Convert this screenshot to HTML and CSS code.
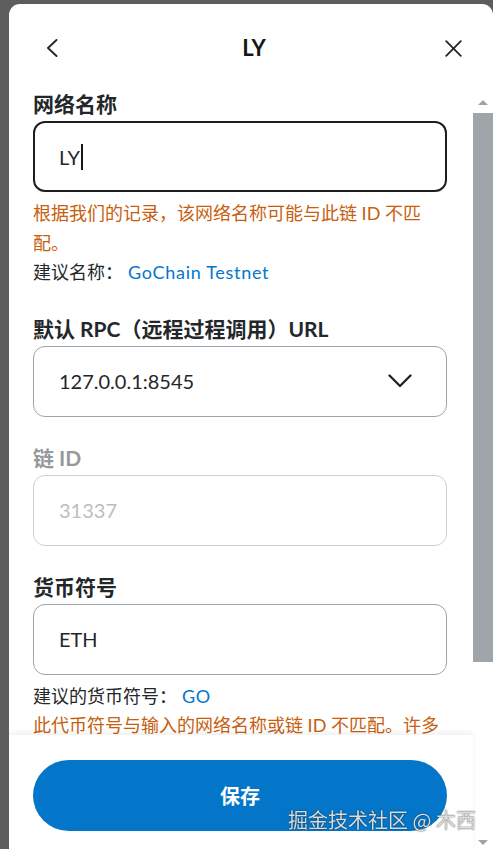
FILE: index.html
```html
<!DOCTYPE html>
<html lang="zh-CN">
<head>
<meta charset="utf-8">
<title>LY</title>
<link rel="stylesheet" href="styles.css">
</head>
<body>
<div class="modal">
  <header class="hdr">
    <button class="icon-btn back" aria-label="返回">
      <svg width="12" height="18" viewBox="0 0 12 18"><polyline points="10.5,1 2,9 10.5,17" fill="none" stroke="#24272a" stroke-width="1.9" stroke-linecap="round" stroke-linejoin="round"/></svg>
    </button>
    <h1 class="title">LY</h1>
    <button class="icon-btn close" aria-label="关闭">
      <svg width="17" height="17" viewBox="0 0 17 17"><path d="M1.2 1.2 L15.8 15.8 M15.8 1.2 L1.2 15.8" fill="none" stroke="#24272a" stroke-width="1.8" stroke-linecap="round"/></svg>
    </button>
  </header>
  <div class="body">
    <div class="main">
      <div class="content">
        <div class="form">
          <div class="field">
            <div class="lbl">网络名称</div>
            <div class="inp focused"><span class="val">LY</span><span class="caret"></span></div>
            <p class="help warn">根据我们的记录，该网络名称可能与此链 ID 不匹配。</p>
            <p class="help">建议名称：<span class="link">GoChain Testnet</span></p>
          </div>
          <div class="field">
            <div class="lbl">默认 RPC（远程过程调用）URL</div>
            <div class="inp select"><span class="val">127.0.0.1:8545</span>
              <svg class="chev" width="24" height="14" viewBox="0 0 24 14"><polyline points="1.5,1.5 12,12 22.5,1.5" fill="none" stroke="#24272a" stroke-width="2.4" stroke-linecap="round" stroke-linejoin="round"/></svg>
            </div>
          </div>
          <div class="field">
            <div class="lbl muted">链 ID</div>
            <div class="inp disabled"><span class="val">31337</span></div>
          </div>
          <div class="field">
            <div class="lbl">货币符号</div>
            <div class="inp"><span class="val">ETH</span></div>
            <p class="help">建议的货币符号：<span class="link">GO</span></p>
            <p class="help warn">此代币符号与输入的网络名称或链 ID 不匹配。许多常用代币使用相似的符号，诈骗者可以利用这一点诱骗您向他们发送更有价值的代币作为回报。在继续之前，请验证所有内容。</p>
          </div>
        </div>
      </div>
      <footer class="foot">
        <button class="save">保存</button>
      </footer>
    </div>
    <div class="sbar" aria-hidden="true">
      <span class="arrow up"></span>
      <span class="thumb"></span>
      <span class="arrow down"></span>
    </div>
  </div>
</div>
<div class="wm">掘金技术社区 @ 木西</div>
</body>
</html>
```

FILE: styles.css
```css
* { box-sizing: border-box; }
html, body { margin: 0; padding: 0; height: 100%; }
body {
  background: #5d5d5d;
  overflow: hidden;
  font-family: Lato, "Noto Sans CJK SC", sans-serif;
  color: #24272a;
}
.modal {
  margin: 4px 0 0 9px;
  width: 484px;
  height: 845px;
  background: #fff;
  border-radius: 11px 11px 0 0;
  display: flex;
  flex-direction: column;
  overflow: hidden;
}
.hdr {
  height: 88px;
  flex: none;
  display: grid;
  grid-template-columns: 1fr auto 1fr;
  align-items: center;
  padding: 0 31px 0 37px;
}
.icon-btn {
  background: none;
  border: 0;
  padding: 0;
  display: flex;
  align-items: center;
  cursor: pointer;
}
.back { justify-self: start; }
.close { justify-self: end; }
.title {
  margin: 0;
  font-size: 22px;
  font-weight: 700;
  line-height: 30px;
  color: #141618;
}
.body {
  flex: 1;
  display: flex;
  min-height: 0;
}
.main {
  flex: 1;
  display: flex;
  flex-direction: column;
  min-width: 0;
}
.content {
  flex: 1;
  overflow: hidden;
}
.sbar {
  flex: none;
  width: 20px;
  display: flex;
  flex-direction: column;
  align-items: center;
}
.arrow {
  display: block;
  width: 0;
  height: 0;
  border-left: 5px solid transparent;
  border-right: 5px solid transparent;
}
.arrow.up {
  border-bottom: 5px solid #a3a3a3;
  margin: 8px 0 8px;
}
.arrow.down {
  border-top: 5px solid #a3a3a3;
  margin-top: auto;
  margin-bottom: 4px;
}
.thumb {
  display: block;
  width: 20px;
  height: 549px;
  background: #a0a5aa;
}
.form {
  padding: 0 26px 15px 24px;
}
.field + .field { margin-top: 29px; }
.lbl {
  font-size: 21px;
  font-weight: 700;
  line-height: 24px;
  margin-bottom: 5px;
  color: #24272a;
}
.lbl.muted { color: #95999d; }
.inp {
  height: 71px;
  border: 1px solid #9ea4aa;
  border-radius: 12px;
  display: flex;
  align-items: center;
  padding: 0 25px;
  font-size: 20px;
  color: #24272a;
}
.inp.focused {
  border: 2px solid #1c1e20;
  padding: 0 24px;
}
.caret {
  display: inline-block;
  width: 2px;
  height: 26px;
  background: #141618;
  margin-left: 1px;
}
.inp.select { justify-content: space-between; padding-right: 34px; }
.inp.disabled { border-color: #cdd0d3; color: #bcbfc2; }
.help {
  margin: 0;
  font-size: 18px;
  line-height: 29.5px;
  color: #24272a;
}
.inp + .help { margin-top: 7px; }
.help.warn { color: #c6600e; }
.link { color: #0376c9; margin-left: 5px; letter-spacing: 0.7px; }
.foot {
  flex: none;
  position: relative;
  background: #fff;
  padding: 25px 26px 18px 24px;
  box-shadow: 0 -3px 5px rgba(0, 0, 0, 0.06);
}
.save {
  display: block;
  width: 100%;
  height: 71px;
  border: 0;
  border-radius: 36px;
  background: #0376c9;
  color: #fff;
  font-family: Lato, "Noto Sans CJK SC", sans-serif;
  font-size: 20px;
  font-weight: 700;
}
.wm {
  position: fixed;
  right: 17px;
  bottom: 19px;
  font-family: "Noto Sans CJK SC", sans-serif;
  font-size: 20px;
  line-height: 20px;
  color: rgba(235, 235, 235, 0.92);
  text-shadow: 0 0 1px rgba(0, 0, 0, 0.75), 0 0 2px rgba(0, 0, 0, 0.35);
  white-space: nowrap;
}
```
